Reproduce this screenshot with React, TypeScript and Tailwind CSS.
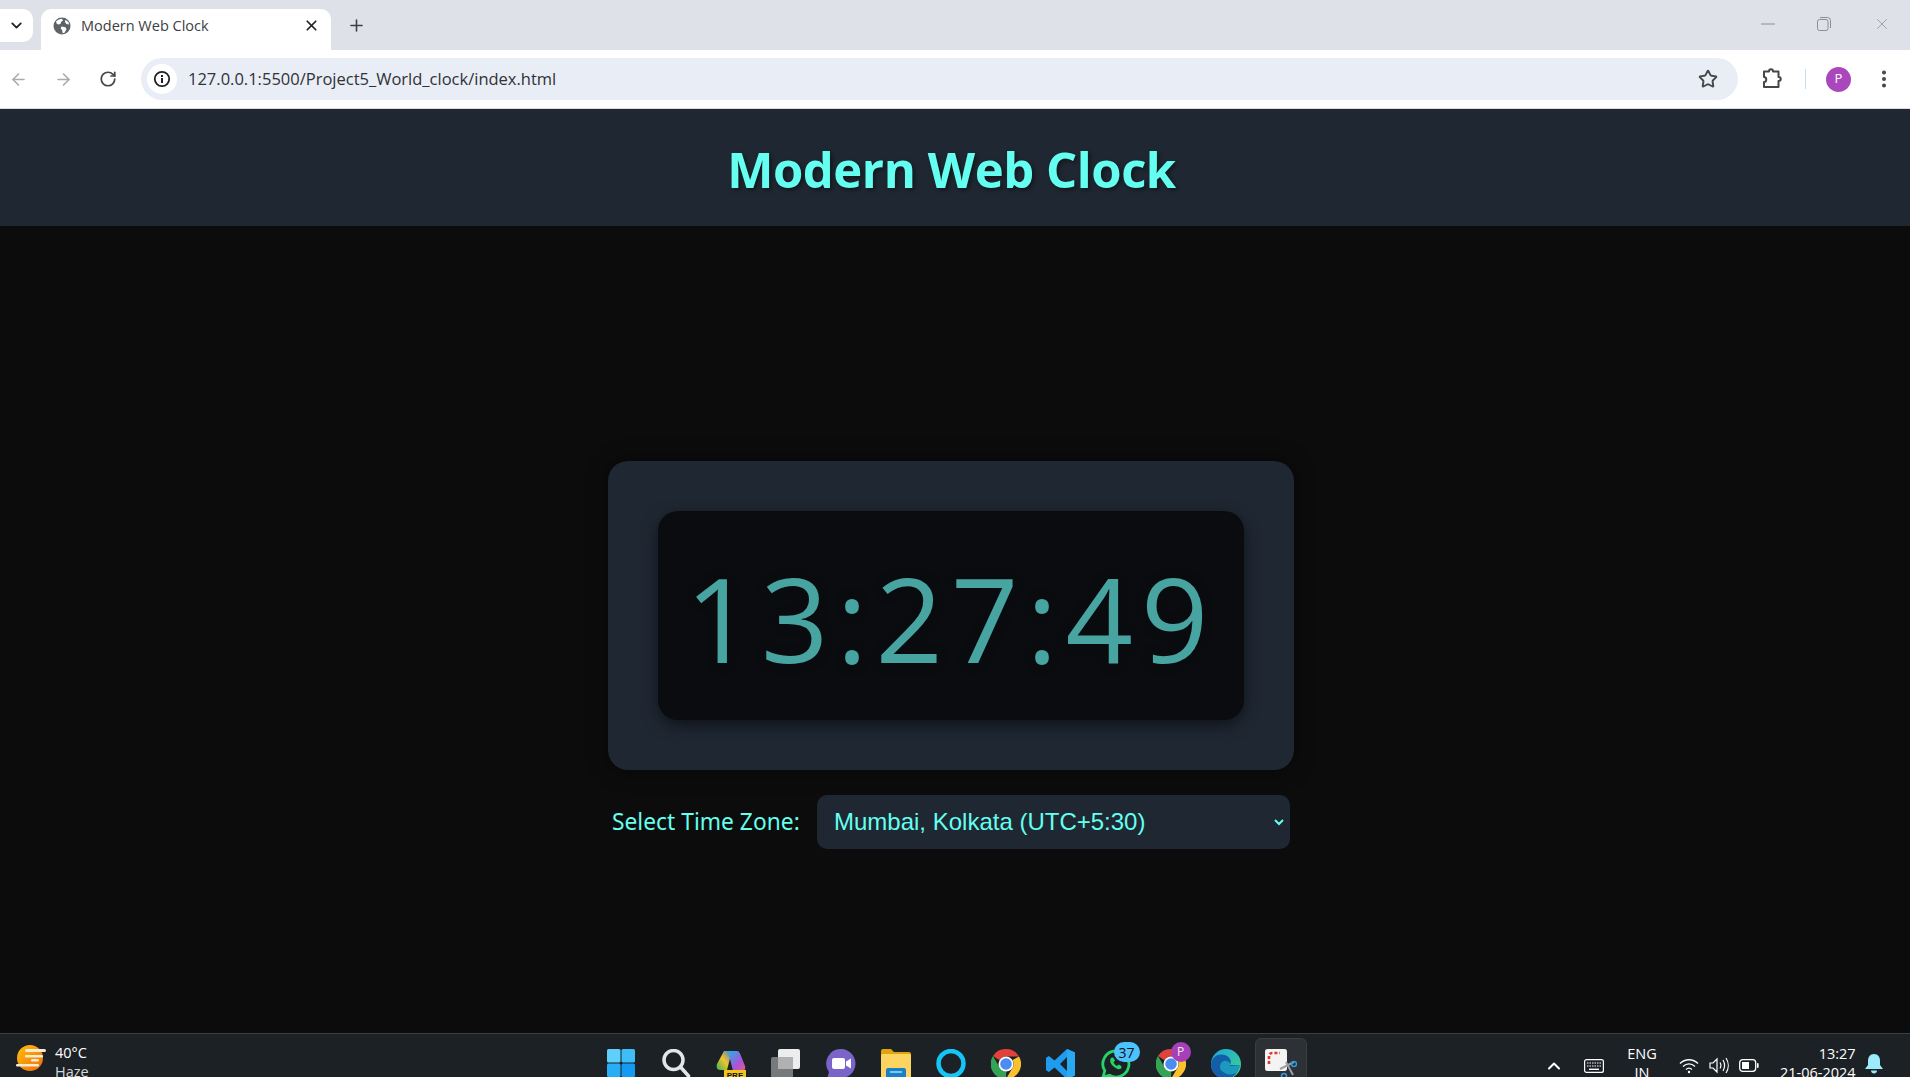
import { useState } from "react";
import {
  ArrowLeft,
  ArrowRight,
  ChevronDown,
  ChevronUp,
  EllipsisVertical,
  Minus,
  Plus,
  RotateCw,
  Star,
  X,
} from "lucide-react";

const ZONES = [
  "Mumbai, Kolkata (UTC+5:30)",
  "London (UTC+0:00)",
  "New York (UTC-5:00)",
  "Tokyo (UTC+9:00)",
];

function Globe() {
  return (
    <svg width="18" height="18" viewBox="0 0 18 18">
      <circle cx="9" cy="9" r="8.5" fill="#5f6368" />
      <path d="M3 4.5c2-2 4-2.8 6-2.8l1 1.8-2 1.6-.5 2-2.3.4L3.6 6.6zM8.5 9.5l4 .8 1 2-2 3.5-1.8.4-.6-3.2-1.4-1.4zM12.5 2.8l3 2.4.6 2.4-2.6-.6-1.6-2z" fill="#fff" />
    </svg>
  );
}

function InfoIcon() {
  return (
    <svg width="18" height="18" viewBox="0 0 18 18">
      <circle cx="9" cy="9" r="7.2" fill="none" stroke="#202124" strokeWidth="1.8" />
      <rect x="8" y="8" width="2" height="5" fill="#202124" />
      <rect x="8" y="5" width="2" height="2" fill="#202124" />
    </svg>
  );
}

function PuzzleIcon() {
  return (
    <svg width="22" height="22" viewBox="0 0 22 22" fill="none" stroke="#474747" strokeWidth="2" strokeLinejoin="round">
      <path d="M3 3.500h5c0-3 4-3 4 0h5.500v5.500c3 0 3 4 0 4v6H3v-5c3 0 3-5 0-5z" />
    </svg>
  );
}

function RestoreIcon() {
  return (
    <svg width="14" height="14" viewBox="0 0 14 14" fill="none" stroke="#8b8e93" strokeWidth="1">
      <rect x="0.500" y="2.500" width="10.500" height="11" rx="2" />
      <path d="M3 .5h7.500a3 3 0 0 1 3 3V11" />
    </svg>
  );
}

function BrowserChrome() {
  return (
    <div className="shrink-0">
      <div className="flex h-[50px] items-end bg-[#dee1e8]">
        <div className="mb-[8px] flex h-[33px] w-[33px] items-center justify-center rounded-r-[10px] bg-white">
          <ChevronDown size={17} strokeWidth={2.6} color="#202124" />
        </div>
        <div className="ml-[8px] flex h-[41px] w-[290px] items-center rounded-t-[10px] bg-white pb-[8px] pl-[12px] pr-[11px]">
          <Globe />
          <span className="ml-[10px] flex-1 font-['Open_Sans',sans-serif] text-[14.500px] text-[#3c4043]">
            Modern Web Clock
          </span>
          <X size={17} strokeWidth={2.4} color="#202124" />
        </div>
        <div className="mb-[15px] ml-[16px] flex-1">
          <Plus size={19} strokeWidth={2} color="#3c4043" />
        </div>
        <div className="mb-[15px] flex items-center pr-[19px]">
          <Minus size={22} strokeWidth={1.1} color="#8b8e93" />
          <div className="ml-[38px]">
            <RestoreIcon />
          </div>
          <X size={18} strokeWidth={1} color="#8b8e93" className="ml-[42px]" />
        </div>
      </div>
      <div className="flex h-[59px] items-center border-b border-[#d9dbe0] bg-white">
        <div className="flex w-[141px] items-center gap-[26px] pl-[9px]">
          <ArrowLeft size={19} strokeWidth={2} color="#a8abaf" />
          <ArrowRight size={19} strokeWidth={2} color="#a8abaf" />
          <RotateCw size={18} strokeWidth={2.3} color="#474747" />
        </div>
        <div className="flex h-[42px] w-[1597px] items-center rounded-full bg-[#e9edf6] pl-[6px] pr-[20px]">
          <div className="flex h-[30px] w-[30px] items-center justify-center rounded-full bg-white">
            <InfoIcon />
          </div>
          <span className="ml-[11px] flex-1 font-['Open_Sans',sans-serif] text-[16.500px] text-[#303236]">
            127.0.0.1:5500/Project5_World_clock/index.html
          </span>
          <Star size={20} strokeWidth={2.3} color="#474747" />
        </div>
        <div className="ml-[23px] flex items-center">
          <PuzzleIcon />
          <div className="ml-[22px] h-[20px] w-px bg-[#c7dcf7]" />
          <div className="ml-[20px] flex h-[25px] w-[25px] items-center justify-center rounded-full bg-[#ab47bc] font-['Open_Sans',sans-serif] text-[13px] text-white">
            P
          </div>
          <EllipsisVertical size={22} strokeWidth={2.4} color="#474747" className="ml-[22px]" />
        </div>
      </div>
    </div>
  );
}

function ClockPage() {
  const [zone, setZone] = useState(ZONES[0]);
  return (
    <div className="flex min-h-0 flex-1 flex-col bg-[#0c0c0c]">
      <header className="flex h-[117px] shrink-0 items-center justify-center bg-[#1f2732] pr-[7px] pt-[5px]">
        <h1 className="font-['Open_Sans',sans-serif] text-[49px] font-bold tracking-[-0.45px] text-[#64fff0] [text-shadow:2px_2px_4px_rgba(0,0,0,0.45)]">
          Modern Web Clock
        </h1>
      </header>
      <main className="flex flex-1 justify-center pr-[8px] pt-[235px]">
        <div className="flex w-[686px] flex-col items-center">
          <div className="w-full rounded-[20px] bg-[#1f2732] p-[50px] shadow-[0_0_20px_rgba(0,0,0,0.5)]">
            <div className="flex h-[209px] w-[586px] items-center justify-center rounded-[20px] bg-[#0a0c10] shadow-[0_5px_15px_rgba(0,0,0,0.5)]">
              <span className="pt-[3px] font-['Open_Sans',sans-serif] text-[118px] tracking-[8px] text-[#47a4a1] [text-shadow:0_0_10px_rgba(10,12,16,0.8)]">
                13:27:49
              </span>
            </div>
          </div>
          <div className="mt-[25px] flex w-full items-center pl-[4px]">
            <label className="w-[205px] font-['Noto_Sans',sans-serif] text-[22.800px] text-[#64fff0]">
              Select Time Zone:
            </label>
            <select
              value={zone}
              onChange={(e) => setZone(e.target.value)}
              className="h-[54px] w-[473px] rounded-[10px] border-r-[3px] border-transparent bg-[#1f2732] pb-[1px] pl-[13px] pr-[6px] font-['Liberation_Sans',sans-serif] text-[24px] text-[#64fff0] outline-none"
            >
              {ZONES.map((z) => (
                <option key={z} value={z}>
                  {z}
                </option>
              ))}
            </select>
          </div>
        </div>
      </main>
    </div>
  );
}

function Sun() {
  return (
    <svg width="32" height="30" viewBox="0 0 32 30">
      <defs>
        <linearGradient id="sun" x1="0" y1="0" x2="1" y2="1">
          <stop offset="0" stopColor="#ffc107" />
          <stop offset="1" stopColor="#f06a10" />
        </linearGradient>
      </defs>
      <circle cx="15" cy="13" r="13" fill="url(#sun)" />
      <rect x="10" y="4" width="21" height="3" rx="1.500" fill="#f7ecd0" />
      <rect x="10" y="10" width="18" height="2.500" rx="1.200" fill="#f7ecd0" />
      <rect x="16" y="14" width="8" height="2.500" rx="1.200" fill="#f7ecd0" />
      <rect x="1" y="19" width="23" height="2.500" rx="1.200" fill="#f7ecd0" />
    </svg>
  );
}

const WinIcon = () => (
  <svg width="30" height="30" viewBox="0 0 30 30">
    <rect x="1" y="0" width="13.500" height="13.500" rx="1.500" fill="#5fd0fb" />
    <rect x="15.500" y="0" width="13.500" height="13.500" rx="1.500" fill="#3fbdf7" />
    <rect x="1" y="14.500" width="13.500" height="13.500" rx="1.500" fill="#29aef5" />
    <rect x="15.500" y="14.500" width="13.500" height="13.500" rx="1.500" fill="#129bf0" />
  </svg>
);

const SearchIcon = () => (
  <svg width="30" height="30" viewBox="0 0 30 30" fill="none" stroke="#e3e5e6" strokeWidth="3.500">
    <circle cx="12.500" cy="11" r="9.500" />
    <path d="M19.500 18l8 9" strokeLinecap="round" />
  </svg>
);

const CopilotIcon = () => (
  <svg width="30" height="30" viewBox="0 0 30 30">
    <defs>
      <linearGradient id="cp1" x1="0" y1="1" x2="1" y2="0">
        <stop offset="0" stopColor="#3ab54a" />
        <stop offset="0.500" stopColor="#f4c430" />
        <stop offset="1" stopColor="#2a7de1" />
      </linearGradient>
      <linearGradient id="cp2" x1="0" y1="0" x2="1" y2="1">
        <stop offset="0" stopColor="#1fb6e8" />
        <stop offset="0.600" stopColor="#a855d8" />
        <stop offset="1" stopColor="#e9559b" />
      </linearGradient>
    </defs>
    <path d="M8 2h8l-5 19H4C1 21 0 18 1 15z" fill="url(#cp1)" />
    <path d="M12 2h9c2 0 3 2 4 5l4 10c1 3-1 5-3 5h-9z" fill="url(#cp2)" />
    <rect x="8" y="21" width="22" height="9" fill="#f5c518" />
    <text x="19" y="29" textAnchor="middle" fontSize="8" fontWeight="700" fill="#111" fontFamily="Liberation Sans, sans-serif">PRE</text>
  </svg>
);

const TaskViewIcon = () => (
  <svg width="30" height="30" viewBox="0 0 30 30">
    <rect x="0" y="8" width="22" height="21" rx="2" fill="#77797b" />
    <rect x="7" y="0" width="22" height="20" rx="2" fill="#eceded" />
    <rect x="7" y="8" width="15" height="12" fill="#b0b1b2" />
  </svg>
);

const TeamsIcon = () => (
  <svg width="30" height="30" viewBox="0 0 30 30">
    <path d="M15 0a14.500 14.500 0 1 1-6 27.700L1 30l2-7A14.500 14.500 0 0 1 15 0z" fill="#7a64c8" />
    <rect x="6" y="9" width="13" height="11" rx="2" fill="#fff" />
    <path d="M20 12.500l5-3v10l-5-3z" fill="#fff" />
  </svg>
);

const FolderIcon = () => (
  <svg width="30" height="30" viewBox="0 0 30 30">
    <path d="M0 2a2 2 0 0 1 2-2h8l3 3h15a2 2 0 0 1 2 2v3H0z" fill="#e0a30c" />
    <rect x="0" y="5" width="30" height="25" rx="1.500" fill="#fcd462" />
    <rect x="5" y="19" width="20" height="11" rx="2" fill="#1d7ec6" />
    <rect x="9" y="22" width="12" height="2" fill="#7cc8f0" />
  </svg>
);

const AlexaIcon = () => (
  <svg width="30" height="30" viewBox="0 0 30 30" fill="none">
    <circle cx="15" cy="14.500" r="12.500" stroke="#14c6f5" strokeWidth="4.500" />
    <path d="M9 30l3-5" stroke="#14c6f5" strokeWidth="4" />
  </svg>
);

const ChromeLogo = () => (
  <svg width="30" height="30" viewBox="0 0 30 30">
    <path d="M15 0a15 15 0 0 1 13 7.500H15a7.500 7.500 0 0 0-6.500 3.800L2 7A15 15 0 0 1 15 0z" fill="#e0433a" />
    <path d="M28 7.500A15 15 0 0 1 15 30l6.500-11.200A7.500 7.500 0 0 0 21.500 11z" fill="#fbc02d" />
    <path d="M15 30A15 15 0 0 1 2 7l6.500 11.300a7.500 7.500 0 0 0 6.800 4z" fill="#34a353" />
    <circle cx="15" cy="15" r="7.500" fill="#fff" />
    <circle cx="15" cy="15" r="5.800" fill="#4a8cf0" />
  </svg>
);

const VsCodeIcon = () => (
  <svg width="30" height="30" viewBox="0 0 30 30">
    <path d="M21 0l8 3.500v23L21 30 8.500 18.500 3 23l-3-1.800v-12.400L3 7l5.500 4.500zM21 8l-7 7 7 7z" fill="#1f9cf0" fillRule="evenodd" />
    <path d="M21 0l8 3.500v23L21 30z" fill="#2aa9f3" />
  </svg>
);

const WhatsAppIcon = () => (
  <div className="relative h-[30px] w-[30px]">
    <svg width="30" height="30" viewBox="0 0 30 30" fill="none">
      <path d="M15 2a13 13 0 1 1-6.500 24.300L2 28l1.800-6.200A13 13 0 0 1 15 2z" stroke="#25d366" strokeWidth="2.800" />
      <path d="M10 9c-1.500 2-1 5 2 8s6 4 8 2.500c1-1 .5-2.500-.5-3l-2-1-1.500 1.500c-1.500-.7-3-2.200-3.500-3.700l1.500-1.500-1-2.300C12.200 8.300 11 8 10 9z" fill="#25d366" />
    </svg>
    <div className="absolute left-[13px] top-[-7px] flex h-[20px] w-[26px] items-center justify-center rounded-full bg-[#4cc2ff] font-['Open_Sans',sans-serif] text-[14px] text-[#111]">
      37
    </div>
  </div>
);

const ProfileChrome = () => (
  <div className="relative h-[30px] w-[30px]">
    <ChromeLogo />
    <div className="absolute left-[15px] top-[-7px] flex h-[20px] w-[20px] items-center justify-center rounded-full bg-[#a63fb8] font-['Open_Sans',sans-serif] text-[12px] text-[#eed]">
      P
    </div>
  </div>
);

const EdgeIcon = () => (
  <svg width="30" height="30" viewBox="0 0 30 30">
    <defs>
      <linearGradient id="edge" x1="0" y1="0" x2="1" y2="1">
        <stop offset="0" stopColor="#1ba7e0" />
        <stop offset="0.700" stopColor="#35c6a0" />
        <stop offset="1" stopColor="#7fe06a" />
      </linearGradient>
    </defs>
    <circle cx="15" cy="15" r="15" fill="url(#edge)" />
    <path d="M0 15C1 7 8 4 14 6c5 2 7 6 5 10h10c-1 6-6 14-14 14C7 30 0 24 0 15z" fill="#125ea8" />
    <path d="M9 18c0-4 3-7 7-6 3 1 4 3 3 5l10-1c0 2-1 5-4 8-4 2-8 2-11 0-3-2-5-3-5-6z" fill="#1fb4c8" opacity="0.700" />
  </svg>
);

const SnipIcon = () => (
  <svg width="32" height="30" viewBox="0 0 32 30" fill="none">
    <rect x="0" y="0" width="22" height="22" rx="2.500" fill="#f4f4f4" />
    <path d="M4 15V7a3 3 0 0 1 3-3h8" stroke="#e0392b" strokeWidth="2.600" strokeDasharray="3 2" />
    <path d="M15 20l14-7M21 13l7 13" stroke="#9aa0a6" strokeWidth="2" />
    <circle cx="29" cy="15" r="2.500" stroke="#2f9ae0" strokeWidth="1.500" />
    <circle cx="19" cy="27" r="2.500" stroke="#2f9ae0" strokeWidth="1.500" />
  </svg>
);

function WifiIcon() {
  return (
    <svg width="20" height="17" viewBox="0 0 20 17" fill="none" stroke="#fff" strokeWidth="1.300">
      <path d="M1 6.500c5-5 13-5 18 0M4 9.500c3.500-3.500 8.500-3.500 12 0M7 12.500c2-1.800 4-1.800 6 0" />
      <circle cx="10" cy="15" r="1.200" fill="#fff" stroke="none" />
    </svg>
  );
}

function VolumeIcon() {
  return (
    <svg width="20" height="17" viewBox="0 0 20 17" fill="none" stroke="#fff" strokeWidth="1.200">
      <path d="M1 6h3l4-4v13l-4-4H1zM11 5.500c1.200 2 1.200 4 0 6M14 3c2 3.500 2 7.500 0 11M17 1c3 4.500 3 10.500 0 15" />
    </svg>
  );
}

function BatteryIcon() {
  return (
    <svg width="20" height="13" viewBox="0 0 20 13" fill="none">
      <rect x="0.700" y="0.700" width="16" height="11.600" rx="3" stroke="#fff" strokeWidth="1.300" />
      <rect x="3" y="3" width="7" height="7" fill="#fff" />
      <rect x="18" y="4" width="1.600" height="5" rx="0.800" fill="#fff" />
    </svg>
  );
}

function BellIcon() {
  return (
    <svg width="18" height="20" viewBox="0 0 18 20">
      <path d="M9 0c4 0 6 3 6 7v4l3 4H0l3-4V7c0-4 2-7 6-7z" fill="#9cebfb" />
      <path d="M6 16.500h6c0 2-1.500 3-3 3s-3-1-3-3z" fill="#9cebfb" />
    </svg>
  );
}

function Taskbar() {
  const apps = [
    <WinIcon key="win" />,
    <SearchIcon key="search" />,
    <CopilotIcon key="copilot" />,
    <TaskViewIcon key="tasks" />,
    <TeamsIcon key="teams" />,
    <FolderIcon key="folder" />,
    <AlexaIcon key="alexa" />,
    <ChromeLogo key="chrome" />,
    <VsCodeIcon key="code" />,
    <WhatsAppIcon key="wa" />,
    <ProfileChrome key="chrome2" />,
    <EdgeIcon key="edge" />,
  ];
  return (
    <footer className="flex h-[44px] shrink-0 overflow-hidden border-t border-[#3c4043] bg-[#1c2126] font-['Open_Sans',sans-serif] text-white">
      <div className="flex w-[593px] shrink-0 pl-[15px] pt-[11px]">
        <Sun />
        <div className="ml-[8px] flex flex-col text-[14.500px] leading-[19px]">
          <span className="mt-[-2px]">40°C</span>
          <span className="text-[#d5d7d8]">Haze</span>
        </div>
      </div>
      <div className="flex shrink-0">
        {apps.map((icon) => (
          <div key={icon.key} className="flex w-[55px] justify-center pt-[15px]">
            {icon}
          </div>
        ))}
        <div className="ml-[2px] mt-[4px] flex h-[60px] w-[52px] justify-center rounded-[6px] border border-[#3a3e42] bg-[#2d3136] pt-[10px]">
          <SnipIcon />
        </div>
      </div>
      <div className="flex min-w-0 flex-1 items-start pl-[237px] pt-[10px] text-[14.500px] leading-[19px]">
        <ChevronUp size={20} strokeWidth={2.4} className="mt-[12px]" />
        <svg width="20" height="14" viewBox="0 0 20 14" fill="none" className="ml-[20px] mt-[15px]">
          <rect x="0.600" y="0.600" width="18.800" height="12.800" rx="2" stroke="#fff" strokeWidth="1.200" />
          <path d="M3 4h14M3 7h14" stroke="#fff" strokeWidth="1.200" strokeDasharray="1.500 1" />
          <path d="M5 10.300h10" stroke="#fff" strokeWidth="1.400" />
        </svg>
        <div className="ml-[20px] flex w-[36px] flex-col items-center">
          <span>ENG</span>
          <span>IN</span>
        </div>
        <div className="ml-[19px] mt-[13px] flex items-center gap-[10px]">
          <WifiIcon />
          <VolumeIcon />
          <BatteryIcon />
        </div>
        <div className="ml-[21px] flex flex-col items-end">
          <span>13:27</span>
          <span>21-06-2024</span>
        </div>
        <div className="ml-[9px] mt-[10px]">
          <BellIcon />
        </div>
      </div>
    </footer>
  );
}

export default function App() {
  return (
    <div className="flex h-[1077px] w-full flex-col overflow-hidden">
      <BrowserChrome />
      <ClockPage />
      <Taskbar />
    </div>
  );
}
